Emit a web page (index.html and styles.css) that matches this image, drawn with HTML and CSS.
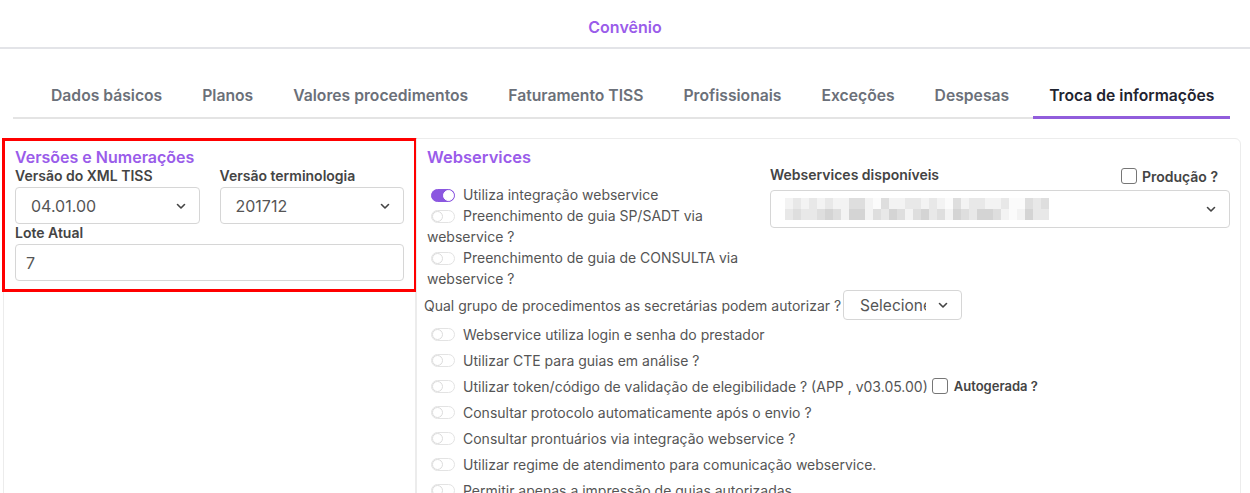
FILE: index.html
```html
<!DOCTYPE html>
<html lang="pt-BR">
<head>
    <meta charset="UTF-8">
    <meta name="viewport" content="width=device-width, initial-scale=1.0">
    <title>Convênio</title>
    <link rel="stylesheet" href="styles.css">
</head>
<body>

    <!-- Header -->
    <header class="page-header">
        <h1>Convênio</h1>
    </header>

    <!-- Tabs -->
    <nav class="tabs">
        <a class="tab">Dados básicos</a>
        <a class="tab">Planos</a>
        <a class="tab">Valores procedimentos</a>
        <a class="tab">Faturamento TISS</a>
        <a class="tab">Profissionais</a>
        <a class="tab">Exceções</a>
        <a class="tab">Despesas</a>
        <a class="tab active">Troca de informações</a>
    </nav>

    <div class="content">
        <!-- Versões e Numerações -->
        <aside class="card card-left">
            <section class="highlight">
                <h2 class="card-title">Versões e Numerações</h2>
                <div class="field-row">
                    <div class="field">
                        <label>Versão do XML TISS</label>
                        <div class="select">
                            <span>04.01.00</span>
                            <svg viewBox="0 0 12 12" width="12" height="12"><path d="M2.5 4.5 6 8l3.5-3.5" fill="none" stroke="#444" stroke-width="1.6" stroke-linecap="round" stroke-linejoin="round"/></svg>
                        </div>
                    </div>
                    <div class="field">
                        <label>Versão terminologia</label>
                        <div class="select">
                            <span>201712</span>
                            <svg viewBox="0 0 12 12" width="12" height="12"><path d="M2.5 4.5 6 8l3.5-3.5" fill="none" stroke="#444" stroke-width="1.6" stroke-linecap="round" stroke-linejoin="round"/></svg>
                        </div>
                    </div>
                </div>
                <div class="field">
                    <label>Lote Atual</label>
                    <div class="input">7</div>
                </div>
            </section>
        </aside>

        <!-- Webservices -->
        <main class="card card-right">
            <div class="ws-top">
                <div class="ws-left">
                    <h2 class="card-title ws-title">Webservices</h2>
                    <div class="toggle-row">
                        <span class="toggle on"></span>Utiliza integração webservice
                    </div>
                    <div class="toggle-row">
                        <span class="toggle"></span>Preenchimento de guia SP/SADT via webservice ?
                    </div>
                    <div class="toggle-row">
                        <span class="toggle"></span>Preenchimento de guia de CONSULTA via webservice ?
                    </div>
                </div>
                <div class="ws-right">
                    <div class="ws-label-row">
                        <label>Webservices disponíveis</label>
                        <span class="check-label"><span class="checkbox"></span>Produção ?</span>
                    </div>
                    <div class="select select-wide">
                        <div class="blur">
                            <div class="blur-row">
                                <i class="a"></i><i class="b"></i><i class="a"></i><i class="b"></i><i class="a"></i><i class="b"></i><i class="a"></i><i class="a"></i><i class="c"></i><i class="c"></i><i class="a"></i><i class="e"></i><i class="c"></i><i class="a"></i><i class="a"></i><i class="b"></i><i class="b"></i><i class="a"></i><i class="b"></i><i class="a"></i><i class="e"></i><i class="c"></i><i class="a"></i><i class="b"></i><i class="b"></i><i class="a"></i><i class="a"></i><i class="b"></i><i class="e"></i><i class="e"></i><i class="c"></i><i class="b"></i><i class="c"></i>
                            </div>
                            <div class="blur-row">
                                <i class="b"></i><i class="c"></i><i class="b"></i><i class="b"></i><i class="c"></i><i class="d"></i><i class="c"></i><i class="a"></i><i class="d"></i><i class="d"></i><i class="a"></i><i class="c"></i><i class="b"></i><i class="d"></i><i class="c"></i><i class="a"></i><i class="c"></i><i class="d"></i><i class="b"></i><i class="c"></i><i class="a"></i><i class="d"></i><i class="c"></i><i class="b"></i><i class="d"></i><i class="d"></i><i class="c"></i><i class="a"></i><i class="e"></i><i class="a"></i><i class="d"></i><i class="b"></i><i class="b"></i>
                            </div>
                        </div>
                        <svg viewBox="0 0 12 12" width="12" height="12"><path d="M2.5 4.5 6 8l3.5-3.5" fill="none" stroke="#444" stroke-width="1.6" stroke-linecap="round" stroke-linejoin="round"/></svg>
                    </div>
                </div>
            </div>

            <div class="group-row">
                Qual grupo de procedimentos as secretárias podem autorizar ?
                <div class="select select-small">
                    <span>Selecione</span>
                    <svg viewBox="0 0 12 12" width="12" height="12"><path d="M2.5 4.5 6 8l3.5-3.5" fill="none" stroke="#444" stroke-width="1.6" stroke-linecap="round" stroke-linejoin="round"/></svg>
                </div>
            </div>

            <ul class="option-list">
                <li><span class="toggle"></span>Webservice utiliza login e senha do prestador</li>
                <li><span class="toggle"></span>Utilizar CTE para guias em análise ?</li>
                <li><span class="toggle"></span>Utilizar token/código de validação de elegibilidade ? (APP , v03.05.00)<span class="checkbox inline"></span><b>Autogerada ?</b></li>
                <li><span class="toggle"></span>Consultar protocolo automaticamente após o envio ?</li>
                <li><span class="toggle"></span>Consultar prontuários via integração webservice ?</li>
                <li><span class="toggle"></span>Utilizar regime de atendimento para comunicação webservice.</li>
                <li><span class="toggle"></span>Permitir apenas a impressão de guias autorizadas</li>
            </ul>
        </main>
    </div>

</body>
</html>
```

FILE: styles.css
```css
/* Reset */
* {
    margin: 0;
    padding: 0;
    box-sizing: border-box;
}

body {
    font-family: Inter, "Noto Sans", Arial, sans-serif;
    color: #555;
    background: #fff;
    font-size: 14px;
    overflow: hidden;
}

/* Header */
.page-header {
    height: 49px;
    border-bottom: 2px solid #e3e4e8;
    display: flex;
    justify-content: center;
    padding-top: 16px;
}

.page-header h1 {
    font-size: 16px;
    font-weight: 600;
    line-height: 22px;
    color: #9a5cea;
}

/* Tabs */
.tabs {
    display: flex;
    margin: 24px 20px 0 13px;
    padding-left: 22px;
    gap: 8px;
    border-bottom: 2px solid #e4e4e4;
}

.tab {
    flex-shrink: 0;
    white-space: nowrap;
    font-size: 15.7px;
    font-weight: 600;
    line-height: 20px;
    color: #6b7079;
    padding: 13px 16px 10px;
    border-bottom: 3px solid transparent;
    margin-bottom: -2px;
}

.tab.active {
    color: #1f2430;
    border-bottom-color: #915ddc;
}

/* Content */
.content {
    display: flex;
    margin-top: 19px;
    padding-left: 3px;
    height: 400px;
}

.card {
    border: 1px solid #ececec;
}

.card-left {
    width: 413px;
    border-top: none;
}

.highlight {
    border: 3px solid #f00;
    margin: 0 -2px 0 -2px;
    padding: 6px 10px 8px 10px;
}

.card-title {
    font-size: 16px;
    font-weight: 600;
    line-height: 20px;
    color: #9a5cea;
}

.field-row {
    display: flex;
    gap: 20px;
}

.field {
    flex: 1;
}

.field label,
.ws-label-row label {
    display: block;
    font-size: 14px;
    font-weight: 600;
    line-height: 18px;
    color: #444;
    margin-bottom: 2px;
}

.select,
.input {
    height: 37px;
    border: 1px solid #d6d6d6;
    border-radius: 4px;
    display: flex;
    align-items: center;
    font-size: 16px;
    color: #555;
    background: #fff;
}

.select {
    justify-content: space-between;
    padding: 0 12px 0 15px;
}

.input {
    padding: 0 10px;
}

/* Webservices */
.card-right {
    width: 825px;
    border-radius: 0 6px 0 0;
    padding: 0 10px 0 10px;
}

.ws-top {
    display: flex;
}

.ws-left {
    width: 333px;
    padding-top: 7px;
}

.ws-title {
    font-size: 16.5px;
    line-height: 22px;
    margin-bottom: 16px;
}

.toggle-row {
    line-height: 21px;
    padding-left: 4px;
}

.toggle-row:nth-child(n+3) {
    padding-left: 0;
}

.toggle {
    display: inline-block;
    width: 24px;
    height: 13px;
    border: 1px solid #e3e3e3;
    border-radius: 7px;
    position: relative;
    vertical-align: -2px;
    margin-right: 8px;
}

.toggle::after {
    content: "";
    position: absolute;
    left: 0;
    top: 0;
    width: 11px;
    height: 11px;
    border-radius: 50%;
    border: 1px solid #dcdcdc;
    box-sizing: border-box;
}

.toggle.on {
    background: #8b57e0;
    border-color: #8b57e0;
}

.toggle.on::after {
    left: auto;
    right: 0;
    background: #fff;
    border-color: #fff;
}

.toggle-row:nth-child(n+3) .toggle {
    margin-left: 4px;
}

.ws-right {
    flex: 1;
    margin-left: 10px;
    padding-top: 27px;
}

.ws-label-row {
    display: flex;
    justify-content: space-between;
    align-items: center;
    padding-right: 12px;
}

.check-label {
    display: flex;
    align-items: center;
    gap: 5px;
    font-weight: 600;
    font-size: 14px;
    color: #444;
}

.checkbox {
    display: inline-block;
    width: 16px;
    height: 16px;
    border: 1px solid #767676;
    border-radius: 3px;
    background: #fff;
}

.select-wide {
    height: 38px;
    padding-left: 14px;
    margin-top: 4px;
}

.blur-row {
    display: flex;
}

.blur-row i {
    width: 8px;
    height: 11px;
    background: #f2f2f2;
}

.blur-row i.a { background: #f3f3f3; }
.blur-row i.b { background: #e8e8e8; }
.blur-row i.c { background: #dedede; }
.blur-row i.d { background: #d4d4d4; }
.blur-row i.e { background: #fbfbfb; }

.group-row {
    display: flex;
    align-items: center;
    margin: 1px 0 0 -3px;
    height: 30px;
    white-space: nowrap;
}

.select-small {
    width: 119px;
    height: 30px;
    margin-left: 2px;
    font-size: 15.5px;
    padding: 0 12px 0 16px;
    overflow: hidden;
}

.select-small span {
    width: 66px;
    overflow: hidden;
    flex-shrink: 0;
}

.option-list {
    list-style: none;
    padding-left: 4px;
    margin-top: 1px;
}

.option-list li {
    height: 26px;
    display: flex;
    align-items: center;
    white-space: nowrap;
}

.checkbox.inline {
    margin: 0 6px 0 4px;
}

.option-list b {
    font-size: 13px;
    font-weight: 600;
    color: #444;
}
```
